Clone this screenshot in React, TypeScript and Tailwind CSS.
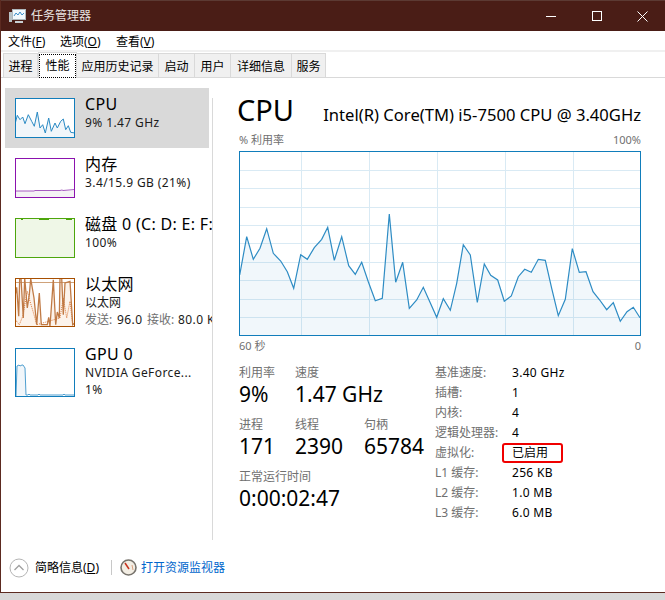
import React from "react";

const cpuA: [number, number][] = [[14,375],[35,260],[55,328],[75,295],[95,236],[115,310],[137,333],[157,365],[176,415],[197,314],[217,328],[238,293],[260,268],[278,232],[298,331],[320,260],[341,347],[361,373],[380,337],[400,395],[421,452],[442,445],[463,192],[482,397],[503,337],[523,475],[545,450],[565,412],[585,457],[605,502]];
const cpuB: [number, number][] = [[10,446],[31,481],[50,400],[70,284],[91,315],[112,457],[133,342],[152,376],[173,390],[193,454],[214,438],[235,380],[254,358],[274,367],[295,328],[316,331],[335,415],[355,497],[376,448],[397,296],[418,367],[438,365],[459,425],[479,450],[500,479],[520,458],[541,514],[561,485],[580,472],[600,503]];
const mainPts = [
  ...cpuA.map(([x, y]) => [235 + x / 3 - 239, 150 + y / 3 - 151]),
  ...cpuB.map(([x, y]) => [440 + x / 3 - 239, 150 + y / 3 - 151]),
].map(([x, y]) => `${x.toFixed(1)},${y.toFixed(1)}`).join(" ");

const hLines = [19, 37, 56, 74, 92, 111, 129, 148, 166];
const vLines = [62, 130, 198, 266, 334];

const miniCpu = [[46,370],[52,347],[60,360],[68,352],[75,372],[85,345],[95,365],[103,380],[112,337],[120,385],[128,375],[136,400],[146,355],[154,395],[165,370],[172,385],[182,365],[190,358],[197,390],[205,378],[212,398],[224,400]]
  .map(([x, y]) => `${((x - 45) / 3).toFixed(1)},${((y - 295) / 3).toFixed(1)}`).join(" ");
const ethSolid = [[16,60],[20,38],[26,125],[29,10],[33,10],[40,130],[44,10],[52,100],[58,60],[62,12],[72,70],[80,150],[88,55],[94,150],[112,150],[116,128],[120,155],[130,15],[137,150],[142,112],[148,130],[150,10],[155,10],[160,120],[165,25],[180,20],[188,150],[195,145]]
  .map(([x, y]) => `${((x - 15) / 3).toFixed(1)},${((y - 10) / 3).toFixed(1)}`).join(" ");
const ethDotted = [[16,135],[28,150],[38,125],[52,50],[60,80],[72,120],[80,150],[150,130],[160,70],[170,130],[180,80],[188,150]]
  .map(([x, y]) => `${((x - 15) / 3).toFixed(1)},${((y - 10) / 3).toFixed(1)}`).join(" ");

function Mini({ h, color, children }: { h: number; color: string; children: React.ReactNode }) {
  return (
    <svg width={60} height={h} viewBox={`0 0 60 ${h}`} className="block shrink-0">
      {children}
      <rect x={0.5} y={0.5} width={59} height={h - 1} fill="none" stroke={color} />
    </svg>
  );
}

function SideItem({ icon, title, sub, active, h }: { icon: React.ReactNode; title: string; sub: React.ReactNode; active?: boolean; h: string }) {
  return (
    <div className={`${h} w-[204px] flex pl-[10px] pt-[10px] gap-[10px] ${active ? "bg-[#d9d9d9]" : ""}`}>
      {icon}
      <div className="min-w-0 -mt-[4px]">
        <div className="text-[16px] leading-[20px] text-black whitespace-nowrap tracking-[0.3px]">{title}</div>
        <div className="text-[12px] leading-[17px] text-[#1a1a1a] whitespace-nowrap">{sub}</div>
      </div>
    </div>
  );
}

function Stat({ label, value, w }: { label: string; value: string; w: string }) {
  return (
    <div className={`${w} shrink-0`}>
      <div className="text-[12px] leading-[16px] text-[#707070] whitespace-nowrap">{label}</div>
      <div className="text-[21px] leading-[28px] -mt-[1px] text-black whitespace-nowrap">{value}</div>
    </div>
  );
}

const rows: [string, string][] = [["基准速度:", "3.40 GHz"], ["插槽:", "1"], ["内核:", "4"], ["逻辑处理器:", "4"], ["虚拟化:", "已启用"], ["L1 缓存:", "256 KB"], ["L2 缓存:", "1.0 MB"], ["L3 缓存:", "6.0 MB"]];
const tabs: [string, string][] = [["进程", "w-[35px]"], ["性能", "w-[39px]"], ["应用历史记录", "w-[82px]"], ["启动", "w-[36px]"], ["用户", "w-[36px]"], ["详细信息", "w-[61px]"], ["服务", "w-[34px]"]];
const L = "tracking-[0.4px]";

export default function App() {
  return (
    <div className="w-[665px] h-[600px] overflow-hidden flex flex-col bg-gradient-to-b from-[#bdbdbd] to-[#d8d8d8] font-['Noto_Sans','Noto_Sans_CJK_SC',sans-serif]">
      <div className="h-[593px] shrink-0 flex flex-col bg-white border-l border-b border-[#5c2a20]">
        <div className="h-[31px] shrink-0 bg-[#4a1d16] border-t border-[#5c3a33] flex items-center text-white">
          <svg width={17} height={15} viewBox="0 0 17 15" className="ml-[8px]">
            <rect x={0} y={3} width={3} height={10} fill="#b9c2c6" />
            <rect x={3.5} y={0.5} width={13} height={10} fill="#f2f8fc" stroke="#aeb8bd" />
            <polyline points="5,7 7,4 9,6 11,3 13,6 15,4" fill="none" stroke="#3d8fc9" />
            <rect x={6} y={12} width={8} height={2} fill="#c9cfd2" />
          </svg>
          <span className="ml-[5px] text-[12px] text-[#e8e2e0] whitespace-nowrap">任务管理器</span>
          <div className="ml-auto flex items-center">
            <div className="w-[10px] h-px bg-white mr-[36px]" />
            <div className="w-[10px] h-[10px] border border-white mr-[35px]" />
            <svg width={11} height={11} viewBox="0 0 11 11" className="mr-[17px]"><path d="M0.5 0.5L10.5 10.5M10.5 0.5L0.5 10.5" stroke="#fff" fill="none" /></svg>
          </div>
        </div>
        <div className="h-[19px] shrink-0 flex items-center pl-[7px] pt-[2px] text-[12px] text-black">
          <span className="w-[52px] whitespace-nowrap">文件(<u>F</u>)</span>
          <span className="w-[56px] whitespace-nowrap">选项(<u>O</u>)</span>
          <span className="whitespace-nowrap">查看(<u>V</u>)</span>
        </div>
        <div className="h-[28px] shrink-0 border-t-2 border-t-[#f0f0f0] border-b border-b-[#d9d9d9] flex items-end pl-[2px] text-[12px] text-black">
          {tabs.map(([t, w], i) =>
            i === 1 ? (
              <div key={t} className={`${w} h-[26px] -mb-px shrink-0 bg-white border border-b-0 border-[#d9d9d9] flex items-center justify-center`}>
                <span className="outline-1 outline-dotted outline-black w-[35px] h-[22px] flex items-center justify-center">{t}</span>
              </div>
            ) : (
              <div key={t} className={`${w} h-[24px] pt-[2px] shrink-0 bg-[#f0f0f0] border border-b-0 border-l-0 first:border-l border-[#d9d9d9] flex items-center justify-center whitespace-nowrap`}>{t}</div>
            )
          )}
        </div>

        <div className="h-[462px] shrink-0 flex">
          <div className="w-[211px] shrink-0 overflow-hidden pl-[4px] pt-[10px]">
            <SideItem
              active
              h="h-[60px]"
              title="CPU"
              sub={<span className={L}>9% 1.47 GHz</span>}
              icon={
                <Mini h={40} color="#117dbb">
                  <rect width={60} height={40} fill="#fff" />
                  <polygon points={`0,40 ${miniCpu} 60,40`} fill="#f1f6fa" />
                  <polyline points={miniCpu} fill="none" stroke="#2a8ac4" />
                </Mini>
              }
            />
            <SideItem
              h="h-[60px]"
              title="内存"
              sub={<span className={L}>3.4/15.9 GB (21%)</span>}
              icon={
                <Mini h={40} color="#8b12ae">
                  <rect width={60} height={40} fill="#fff" />
                  <rect y={33} width={60} height={7} fill="#f4f2f4" />
                  <polyline points="0,33 19,33 20,32.5 45,32.5 47,32 48,32.5 60,31.5" fill="none" stroke="#a65cc0" />
                </Mini>
              }
            />
            <SideItem
              h="h-[60px]"
              title="磁盘 0 (C: D: E: F:)"
              sub={<span className={L}>100%</span>}
              icon={
                <Mini h={40} color="#4da60c">
                  <rect width={60} height={40} fill="#eff7e7" />
                  <path d="M6 1.5h2M24 1.5h10M57 1.5h-6" stroke="#4da60c" fill="none" />
                </Mini>
              }
            />
            <SideItem
              h="h-[70px]"
              title="以太网"
              sub={
                <>
                  <div>以太网</div>
                  <div className="flex">
                    <span className="text-[#707070] w-[32px] shrink-0">发送:</span>
                    <span className={`${L} w-[30px] shrink-0`}>96.0</span>
                    <span className="text-[#707070] w-[31px] shrink-0">接收:</span>
                    <span className={`${L} shrink-0`}>80.0 Kbps</span>
                  </div>
                </>
              }
              icon={
                <Mini h={49} color="#a74f01">
                  <rect width={60} height={49} fill="#fff" />
                  <polygon points={`0,49 ${ethSolid} 60,49`} fill="#fcf3eb" />
                  <line x1={0} x2={60} y1={4.5} y2={4.5} stroke="#cfa27a" />
                  <polyline points={ethDotted} fill="none" stroke="#dc7a3c" strokeDasharray="1 1" />
                  <polyline points={ethSolid} fill="none" stroke="#c07a45" strokeWidth={1.3} />
                </Mini>
              }
            />
            <SideItem
              h="h-[70px]"
              title="GPU 0"
              sub={<><div className={L}>NVIDIA GeForce...</div><div className={L}>1%</div></>}
              icon={
                <Mini h={49} color="#117dbb">
                  <rect width={60} height={49} fill="#fff" />
                  <polygon points="1,48 2,18 4,17 8,17 10,20 11,48" fill="#f1f6fa" />
                  <polyline points="1,48 2,18 4,17 5,18 7,17 8,17 10,20 11,47 13,47 14,46 15,47 23,47 24,46 25,47 48,47 49,46 50,47 59,47" fill="none" stroke="#4f9fd0" />
                </Mini>
              }
            />
          </div>
          <div className="w-px h-[442px] mt-[20px] bg-[#d9d9d9] shrink-0" />

          <div className="flex-1 min-w-0 pl-[26px] pr-[24px] flex flex-col">
            <div className="flex items-end justify-between h-[46px] mt-[9px]">
              <span className="text-[29px] leading-[46px] text-black -ml-[2px]">CPU</span>
              <span className="text-[16.6px] leading-[24px] mb-[6px] text-black whitespace-nowrap">Intel(R) Core(TM) i5-7500 CPU @ 3.40GHz</span>
            </div>
            <div className="flex justify-between text-[11px] leading-[16px] text-[#707070] mt-[-1px] h-[16px]">
              <span>% 利用率</span>
              <span>100%</span>
            </div>
            <svg width={402} height={185} viewBox="0 0 402 185" className="block shrink-0 mt-[3px]">
              <rect width={402} height={185} fill="#fff" />
              {hLines.map((y) => <line key={y} x1={0} x2={402} y1={y + 0.5} y2={y + 0.5} stroke="#d9eaf4" />)}
              {vLines.map((x) => <line key={x} x1={x + 0.5} x2={x + 0.5} y1={0} y2={185} stroke="#d9eaf4" />)}
              <polygon points={`0.5,184 ${mainPts} 401,184`} fill="#117dbb" fillOpacity={0.06} />
              <polyline points={mainPts} fill="none" stroke="#2e8cc4" strokeWidth={1.2} />
              <rect x={0.5} y={0.5} width={401} height={184} fill="none" stroke="#117dbb" />
            </svg>
            <div className="flex justify-between text-[11px] leading-[16px] text-[#707070] h-[16px] mt-[2px]">
              <span>60 秒</span>
              <span>0</span>
            </div>

            <div className="flex mt-[9px]">
              <div className="w-[196px] shrink-0 flex flex-col gap-[9px] pt-[2px]">
                <div className="flex"><Stat w="w-[56px]" label="利用率" value="9%" /><Stat w="w-[69px]" label="速度" value="1.47 GHz" /></div>
                <div className="flex"><Stat w="w-[56px]" label="进程" value="171" /><Stat w="w-[69px]" label="线程" value="2390" /><Stat w="w-[60px]" label="句柄" value="65784" /></div>
                <Stat w="w-[120px]" label="正常运行时间" value="0:00:02:47" />
              </div>
              <div className="flex flex-col text-[12px]">
                {rows.map(([k, v], i) => (
                  <div key={k} className="flex h-[20px] items-center whitespace-nowrap">
                    <span className="w-[77px] text-[#707070]">{k}</span>
                    <span className={i === 4 ? "text-black -ml-[10px] -my-px pl-[8px] w-[61px] h-[20px] flex items-center border-2 border-[#f00000] rounded-[3px]" : "text-black tracking-[0.3px]"}>{v}</span>
                  </div>
                ))}
              </div>
            </div>
          </div>
        </div>

        <div className="flex-1 flex items-center pl-[8px] pt-[3px] text-[12px]">
          <svg width={20} height={20} viewBox="0 0 20 20" className="shrink-0">
            <circle cx={10} cy={10} r={9} fill="#fff" stroke="#b5b5b5" />
            <path d="M5.5 12L10 7.5L14.5 12" fill="none" stroke="#a0a0a0" strokeWidth={1.3} />
          </svg>
          <span className="ml-[6px] w-[76px] text-black whitespace-nowrap">简略信息(<u>D</u>)</span>
          <div className="w-px h-[15px] bg-[#c8c8c8]" />
          <svg width={17} height={17} viewBox="0 0 17 17" className="ml-[8px] shrink-0">
            <circle cx={8.5} cy={8.5} r={7.5} fill="#f3eee4" stroke="#77736c" strokeWidth={1.6} />
            <path d="M5 4L9 10" stroke="#c8321e" strokeWidth={1.5} />
            <path d="M12 6l1 5" stroke="#d9a080" />
          </svg>
          <span className="ml-[4px] text-[#0066cc] whitespace-nowrap">打开资源监视器</span>
        </div>
      </div>
    </div>
  );
}
